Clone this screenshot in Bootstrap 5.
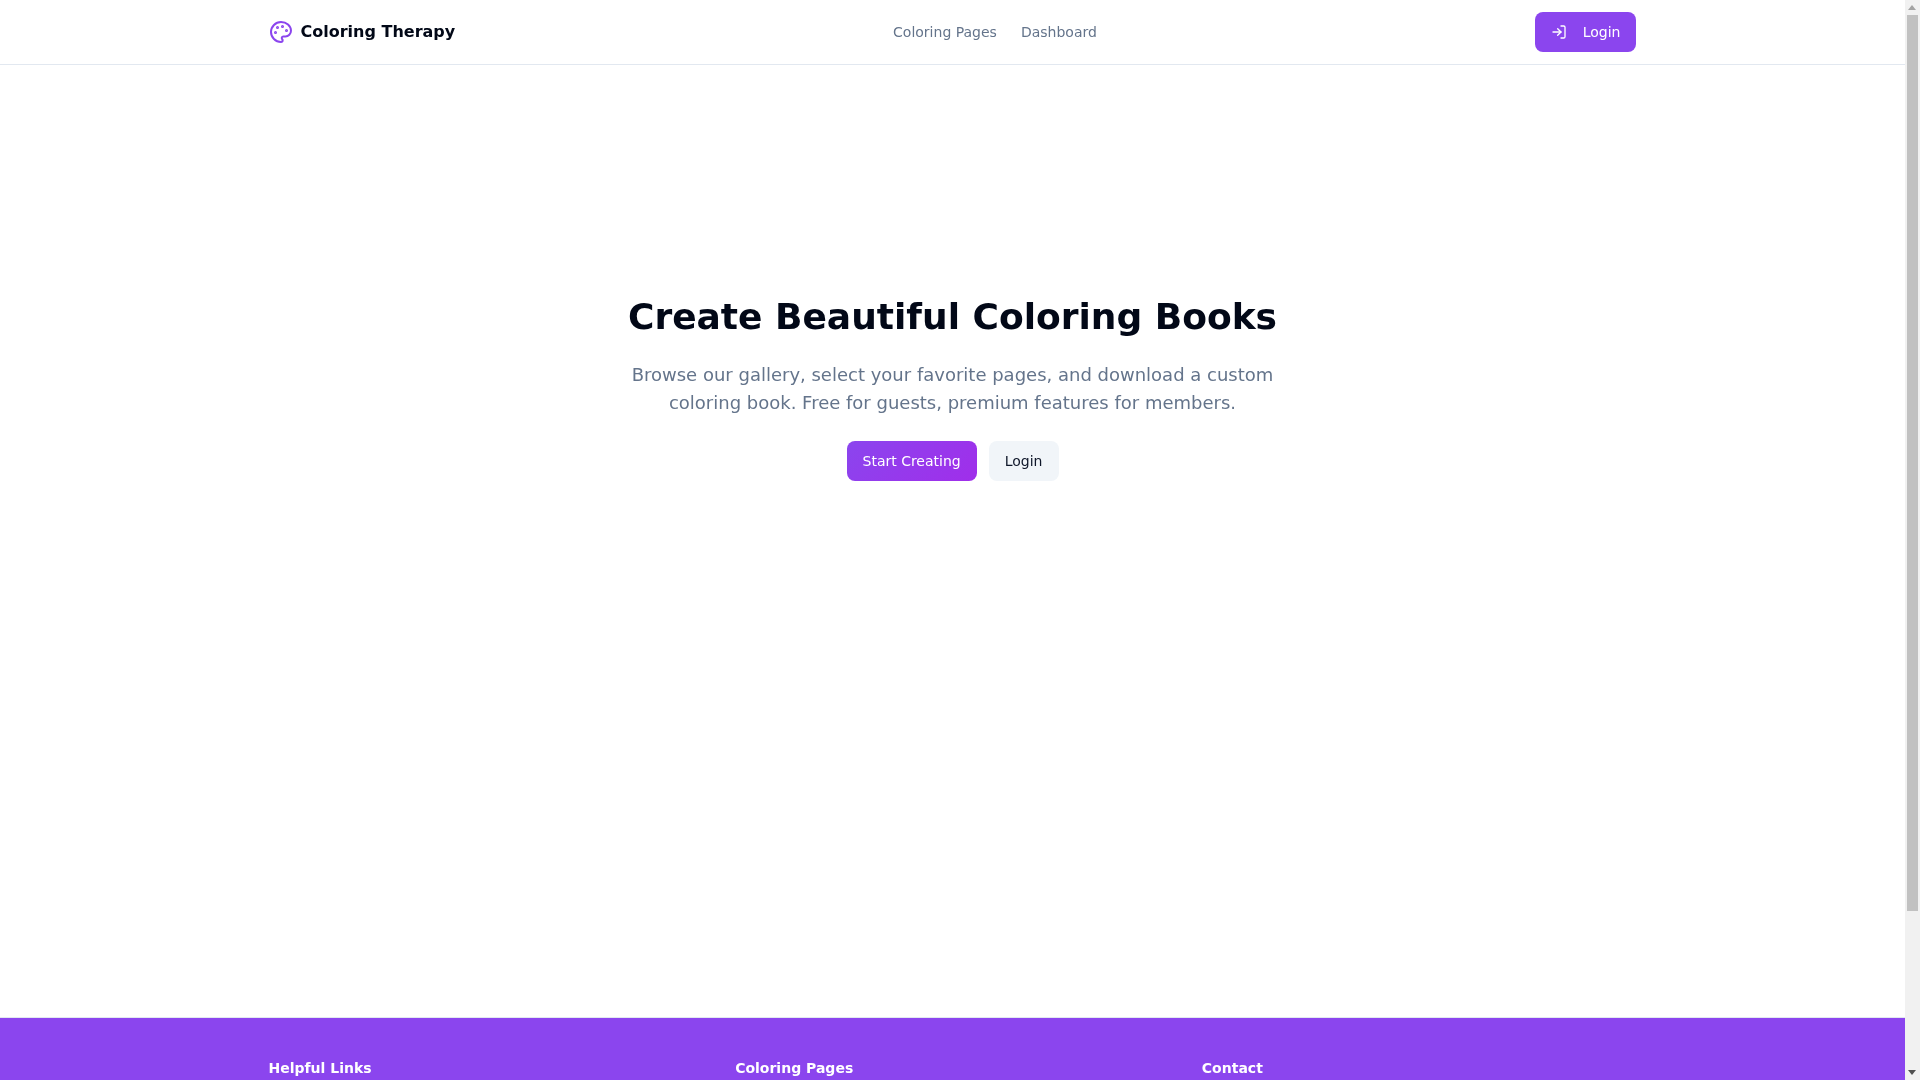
<!doctype html>
<html lang="en"><head><meta charset="utf-8"><title>Coloring Therapy</title>
<link href="https://cdn.jsdelivr.net/npm/bootstrap@5.3.0/dist/css/bootstrap.min.css" rel="stylesheet">
<style>
body{font-family:"DejaVu Sans",sans-serif;color:#020817;background:#fff;font-size:16px;padding-right:15px}
.site-head{height:65px;border-bottom:1px solid #e2e8f0;background:#fff}
.wrap{max-width:1400px;padding:0 16px;margin:0 auto;width:100%;will-change:opacity}
.brand-name{font-size:16px;font-weight:700;color:#020817;line-height:24px;text-decoration:none}
.brand-ico{width:24px;height:24px;color:#8b45ee}
.top-link{font-size:14px;line-height:20px;color:#64748b;text-decoration:none}
.pbtn,.gbtn{height:40px;border-radius:8px;padding:0 16px;font-size:14px;line-height:20px;border:0;display:inline-flex;align-items:center;text-decoration:none}
.pbtn{background:#8b45ee;color:#fff}
.pbtn-grad{background:linear-gradient(135deg,#8b45ee,#a02eea)}
.gbtn{background:#f1f5f9;color:#0f172a}
.head-btn{gap:16px}
.hero-main{height:952px}
.hero-box{padding-top:232px;will-change:opacity}
.hero-title{font-size:36px;line-height:40px;font-weight:700;color:#020817;margin:0 0 24px}
.hero-text{font-size:18px;line-height:28px;color:#64748b;max-width:672px;margin:0 auto 24px}
.hero-actions{gap:12px}
.site-foot{background:#8b45ee;color:#fff;padding:40px 0;height:248px;border-top:1px solid #e2e8f0}
.foot-grid{display:grid;grid-template-columns:repeat(3,1fr);gap:32px}
.foot-h{font-size:14px;line-height:20px;font-weight:700;margin:0 0 12px;color:#fff}
.foot-list{list-style:none;padding:0;margin:0;font-size:14px;line-height:20px}
.foot-list li{margin-bottom:8px}
.foot-list a{color:#fff;opacity:.85;text-decoration:none}
.rail{position:fixed;top:0;right:0;bottom:0;width:15px;background:#f1f1f1}
.rail-thumb{position:absolute;top:15px;left:2px;width:11px;height:896px;background:#c1c1c1}
.rail-up,.rail-down{position:absolute;left:3px;width:0;height:0;border-left:4.5px solid transparent;border-right:4.5px solid transparent}
.rail-up{top:5px;border-bottom:5px solid #a3a3a3}
.rail-down{bottom:5px;border-top:5px solid #505050}
</style></head>
<body>
<header class="site-head d-flex align-items-center">
 <div class="wrap d-flex align-items-center justify-content-between">
  <a href="#" class="d-flex align-items-center gap-2 brand-name">
   <svg class="brand-ico" viewBox="0 0 24 24" fill="none" stroke="currentColor" stroke-width="2" stroke-linecap="round" stroke-linejoin="round"><circle cx="13.5" cy="6.5" r=".5" fill="currentColor"/><circle cx="17.5" cy="10.5" r=".5" fill="currentColor"/><circle cx="8.5" cy="7.5" r=".5" fill="currentColor"/><circle cx="6.5" cy="12.5" r=".5" fill="currentColor"/><path d="M12 2C6.5 2 2 6.5 2 12s4.5 10 10 10c.926 0 1.648-.746 1.648-1.688 0-.437-.18-.835-.437-1.125-.29-.289-.438-.652-.438-1.125a1.64 1.64 0 0 1 1.668-1.668h1.996c3.051 0 5.555-2.503 5.555-5.554C21.965 6.012 17.461 2 12 2z"/></svg>
   <span>Coloring Therapy</span>
  </a>
  <nav class="d-flex gap-4">
   <a class="top-link" href="#">Coloring Pages</a>
   <a class="top-link" href="#">Dashboard</a>
  </nav>
  <a href="#" class="pbtn head-btn">
   <svg width="16" height="16" viewBox="0 0 24 24" fill="none" stroke="currentColor" stroke-width="2" stroke-linecap="round" stroke-linejoin="round"><path d="M15 3h4a2 2 0 0 1 2 2v14a2 2 0 0 1-2 2h-4"/><polyline points="10 17 15 12 10 7"/><line x1="15" y1="12" x2="3" y2="12"/></svg>
   <span>Login</span>
  </a>
 </div>
</header>
<main class="hero-main text-center">
 <div class="hero-box">
  <h1 class="hero-title">Create Beautiful Coloring Books</h1>
  <p class="hero-text">Browse our gallery, select your favorite pages, and download a custom coloring book. Free for guests, premium features for members.</p>
  <div class="d-flex justify-content-center hero-actions">
   <a class="pbtn pbtn-grad" href="#">Start Creating</a>
   <a class="gbtn" href="#">Login</a>
  </div>
 </div>
</main>
<footer class="site-foot">
 <div class="wrap foot-grid">
  <div><h3 class="foot-h">Helpful Links</h3><ul class="foot-list"><li><a href="#">About Us</a></li><li><a href="#">Contact</a></li><li><a href="#">FAQ</a></li></ul></div>
  <div><h3 class="foot-h">Coloring Pages</h3><ul class="foot-list"><li><a href="#">Browse Gallery</a></li><li><a href="#">Categories</a></li></ul></div>
  <div><h3 class="foot-h">Contact</h3><ul class="foot-list"><li><a href="#">support@coloringtherapy.com</a></li></ul></div>
 </div>
</footer>
<div class="rail" aria-hidden="true"><div class="rail-up"></div><div class="rail-thumb"></div><div class="rail-down"></div></div>
</body></html>
